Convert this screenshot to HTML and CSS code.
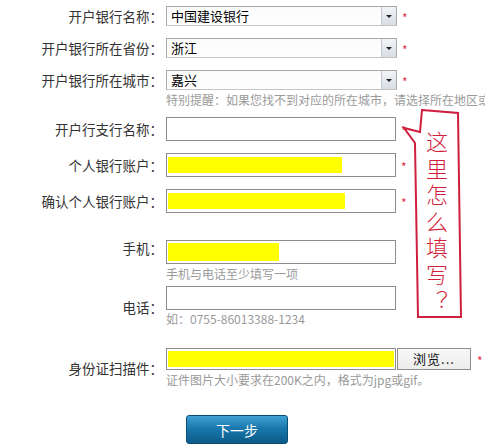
FILE: index.html
```html
<!DOCTYPE html>
<html lang="zh-CN">
<head>
<meta charset="utf-8">
<title>开户信息</title>
<link rel="stylesheet" href="styles.css">
</head>
<body>
<div class="form">
  <div class="row mb12">
    <div class="lbl h20">开户银行名称：</div>
    <div class="cell">
      <div class="line">
        <div class="select"><span class="sel-text">中国建设银行</span><span class="sel-btn"><i class="tri"></i></span></div>
        <span class="req">*</span>
      </div>
    </div>
  </div>
  <div class="row mb12">
    <div class="lbl h20">开户银行所在省份：</div>
    <div class="cell">
      <div class="line">
        <div class="select"><span class="sel-text">浙江</span><span class="sel-btn"><i class="tri"></i></span></div>
        <span class="req">*</span>
      </div>
    </div>
  </div>
  <div class="row mb9">
    <div class="lbl h20 top">开户银行所在城市：</div>
    <div class="cell">
      <div class="line">
        <div class="select"><span class="sel-text">嘉兴</span><span class="sel-btn"><i class="tri"></i></span></div>
        <span class="req">*</span>
      </div>
      <div class="hint mt2 clip">特别提醒：如果您找不到对应的所在城市，请选择所在地区或</div>
    </div>
  </div>
  <div class="row mb12">
    <div class="lbl h24">开户行支行名称：</div>
    <div class="cell">
      <div class="line">
        <div class="field"></div>
        <span class="req">*</span>
      </div>
    </div>
  </div>
  <div class="row mb12">
    <div class="lbl h24">个人银行账户：</div>
    <div class="cell">
      <div class="line">
        <div class="field"><div class="redact w174"></div></div>
        <span class="req">*</span>
      </div>
    </div>
  </div>
  <div class="row mb27">
    <div class="lbl h24">确认个人银行账户：</div>
    <div class="cell">
      <div class="line">
        <div class="field"><div class="redact w177"></div></div>
        <span class="req">*</span>
      </div>
    </div>
  </div>
  <div class="row mb4">
    <div class="lbl top mobile">手机：</div>
    <div class="cell">
      <div class="field tight"><div class="redact w111"></div></div>
      <div class="hint mt2">手机与电话至少填写一项</div>
    </div>
  </div>
  <div class="row mb21">
    <div class="lbl mid">电话：</div>
    <div class="cell">
      <div class="field"></div>
      <div class="hint mt1">如：0755-86013388-1234</div>
    </div>
  </div>
  <div class="row mb27">
    <div class="lbl mid">身份证扫描件：</div>
    <div class="cell">
      <div class="line">
        <div class="field file"><div class="redact w227"></div></div>
        <button class="browse" type="button">浏览...</button>
        <span class="req req-file">*</span>
      </div>
      <div class="hint mt2">证件图片大小要求在200K之内，格式为jpg或gif。</div>
    </div>
  </div>
  <div class="row">
    <div class="lbl"></div>
    <div class="cell">
      <button class="next" type="button">下一步</button>
    </div>
  </div>
</div>

<div class="note">
  <svg class="note-shape" width="66" height="216" viewBox="0 0 66 216">
    <path d="M22,5 L58,8 L61,212 L18,212 L15,38 L4,23 L20,27 Z" fill="none" stroke="#cf1f3d" stroke-width="2" stroke-linejoin="miter"/>
  </svg>
  <div class="note-text">这里怎么填写？</div>
</div>
</body>
</html>
```

FILE: styles.css
```css
html, body {
  margin: 0;
  padding: 0;
  overflow: hidden;
  background: #fff;
}
body {
  width: 485px;
  height: 445px;
  position: relative;
  font-family: "Noto Sans CJK SC", "Liberation Sans", sans-serif;
  color: #333;
}
.form {
  padding-top: 6px;
}
.row {
  display: grid;
  grid-template-columns: 163px 322px;
  column-gap: 3px;
}
.mb4 { margin-bottom: 4px; }
.mb9 { margin-bottom: 9px; }
.mb12 { margin-bottom: 12px; }
.mb21 { margin-bottom: 21px; }
.mb27 { margin-bottom: 27px; }
.mt1 { margin-top: 1px; }
.mt2 { margin-top: 2px; }

.lbl {
  text-align: right;
  font-size: 13.5px;
  color: #333;
  white-space: nowrap;
}
.h20 { line-height: 20px; }
.h24 { line-height: 24px; }
.top { align-self: start; }
.mid { align-self: center; }
.mobile { line-height: 17px; }

.cell {
  display: flex;
  flex-direction: column;
  align-items: flex-start;
  min-width: 0;
}
.line {
  display: flex;
  align-items: center;
}

.select {
  width: 231px;
  height: 20px;
  box-sizing: border-box;
  border: 1px solid #a9a9a9;
  border-bottom-color: #c4c4c4;
  background: linear-gradient(#fbfbfb, #ffffff);
  display: flex;
  align-items: center;
}
.sel-text {
  flex: 1;
  padding-left: 4px;
  font-size: 13px;
  line-height: 18px;
  color: #000;
}
.sel-btn {
  width: 15px;
  height: 18px;
  box-sizing: border-box;
  border-left: 1px solid #c3c9cf;
  background: linear-gradient(#f2f4f6, #d8dde2);
  display: flex;
  align-items: center;
  justify-content: center;
}
.tri {
  width: 0;
  height: 0;
  border-left: 3px solid transparent;
  border-right: 3px solid transparent;
  border-top: 3px solid #222;
}
.req {
  margin-left: 5px;
  color: #e0304a;
  font-size: 12px;
  line-height: 12px;
  padding-top: 4px;
}
.req-file { margin-left: 6px; }

.field {
  width: 230px;
  height: 24px;
  box-sizing: border-box;
  border: 1px solid #8d8d8d;
  background: #fff;
  padding: 3px 1px;
  display: flex;
}
.field.tight { padding: 2px 1px; }
.field.file {
  height: 22px;
  padding: 2px 1px;
}
.redact {
  height: 100%;
  background: #ffff00;
}
.w111 { width: 111px; }
.w174 { width: 174px; }
.w177 { width: 177px; }
.w227 { width: 227px; }

.hint {
  font-size: 12px;
  line-height: 16px;
  color: #9a9a9a;
  white-space: nowrap;
}
.hint.clip {
  width: 319px;
  overflow: hidden;
}

.browse {
  margin: 0 0 0 1px;
  width: 74px;
  height: 22px;
  box-sizing: border-box;
  border: 1px solid #8d8d8d;
  background: linear-gradient(#f8f8f8, #ececec);
  font-family: "Noto Sans CJK SC", "Liberation Sans", sans-serif;
  font-size: 13px;
  line-height: 18px;
  color: #111;
  padding: 0;
  letter-spacing: 1px;
}

.next {
  margin: 0 0 0 20px;
  width: 102px;
  height: 29px;
  box-sizing: border-box;
  border: 1px solid #0c4e74;
  border-radius: 3px;
  background: linear-gradient(#3fa2d6 0%, #1a78ad 45%, #0b5b88 100%);
  color: #fff;
  font-family: "Noto Sans CJK SC", "Liberation Sans", sans-serif;
  font-size: 14px;
  padding: 0;
}

.note {
  position: absolute;
  left: 400px;
  top: 105px;
  width: 66px;
  height: 216px;
}
.note-shape {
  position: absolute;
  left: 0;
  top: 0;
}
.note-text {
  position: absolute;
  left: 24px;
  top: 26px;
  width: 26px;
  writing-mode: vertical-rl;
  text-orientation: upright;
  font-size: 22px;
  line-height: 26px;
  letter-spacing: 4.5px;
  color: #d21f3c;
  font-weight: 300;
}
```
